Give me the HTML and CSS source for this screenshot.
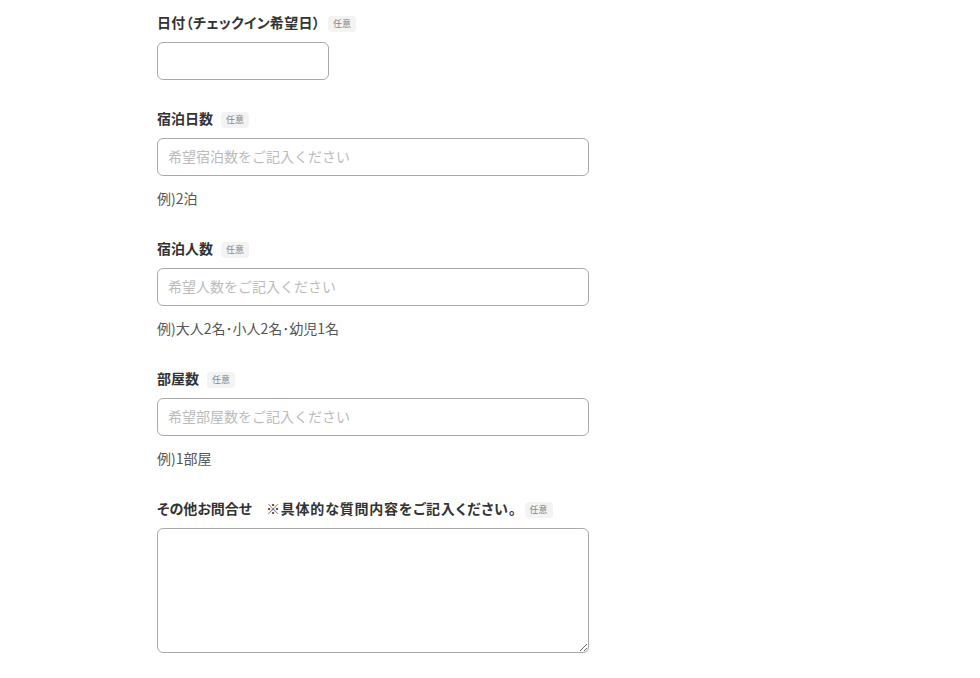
FILE: index.html
```html
<!DOCTYPE html>
<html lang="ja">
<head>
<meta charset="utf-8">
<link rel="stylesheet" href="styles.css">
</head>
<body>
<form class="form">
  <div class="field">
    <div class="label"><span class="label-text label-text-wide">日付（チェックイン希望日）</span><span class="badge">任意</span></div>
    <input class="input input-date" type="text">
  </div>
  <div class="field">
    <div class="label"><span class="label-text">宿泊日数</span><span class="badge">任意</span></div>
    <input class="input" type="text" placeholder="希望宿泊数をご記入ください">
    <p class="help">例)2泊</p>
  </div>
  <div class="field">
    <div class="label"><span class="label-text">宿泊人数</span><span class="badge">任意</span></div>
    <input class="input" type="text" placeholder="希望人数をご記入ください">
    <p class="help">例)大人2名･小人2名･幼児1名</p>
  </div>
  <div class="field">
    <div class="label"><span class="label-text">部屋数</span><span class="badge">任意</span></div>
    <input class="input" type="text" placeholder="希望部屋数をご記入ください">
    <p class="help">例)1部屋</p>
  </div>
  <div class="field">
    <div class="label"><span class="label-text">その他お問合せ　<span class="note">※具体的な質問内容をご記入ください。</span></span><span class="badge">任意</span></div>
    <textarea class="input textarea"></textarea>
  </div>
</form>
</body>
</html>
```

FILE: styles.css
```css
html, body {
  margin: 0;
  padding: 0;
  background: #fff;
}
body {
  font-family: "Noto Sans CJK JP", "Noto Sans", sans-serif;
  color: #333;
  font-feature-settings: "palt";
}
.form {
  width: 432px;
  margin-left: 157px;
  padding-top: 12px;
  display: flex;
  flex-direction: column;
  gap: 28px;
}
.field {
  display: flex;
  flex-direction: column;
  align-items: flex-start;
}
.label {
  display: flex;
  align-items: center;
  height: 20px;
  margin-bottom: 10px;
}
.label-text {
  font-size: 14px;
  font-weight: 700;
  color: #333;
  line-height: 20px;
  white-space: nowrap;
}
.label-text-wide {
  letter-spacing: 0.3px;
}
.note {
  letter-spacing: 0.8px;
}
.badge {
  margin-left: 8px;
  margin-top: 4px;
  font-size: 9px;
  line-height: 16px;
  height: 16px;
  padding: 0 5px;
  background: #f3f3f3;
  color: #888;
  border-radius: 4px;
}
.input {
  box-sizing: border-box;
  width: 432px;
  height: 38px;
  border: 1px solid #aaa;
  border-radius: 6px;
  padding: 0 10px 2px;
  font-family: inherit;
  font-size: 14px;
  color: #333;
  background: #fff;
  font-feature-settings: normal;
  outline: none;
  margin: 0;
}
.input::placeholder {
  color: #bbb;
}
.input-date {
  width: 172px;
}
.textarea {
  height: 125px;
  padding: 8px 10px;
  display: block;
}
.help {
  margin: 12px 0 2px;
  font-size: 14px;
  line-height: 20px;
  color: #555;
}
```
